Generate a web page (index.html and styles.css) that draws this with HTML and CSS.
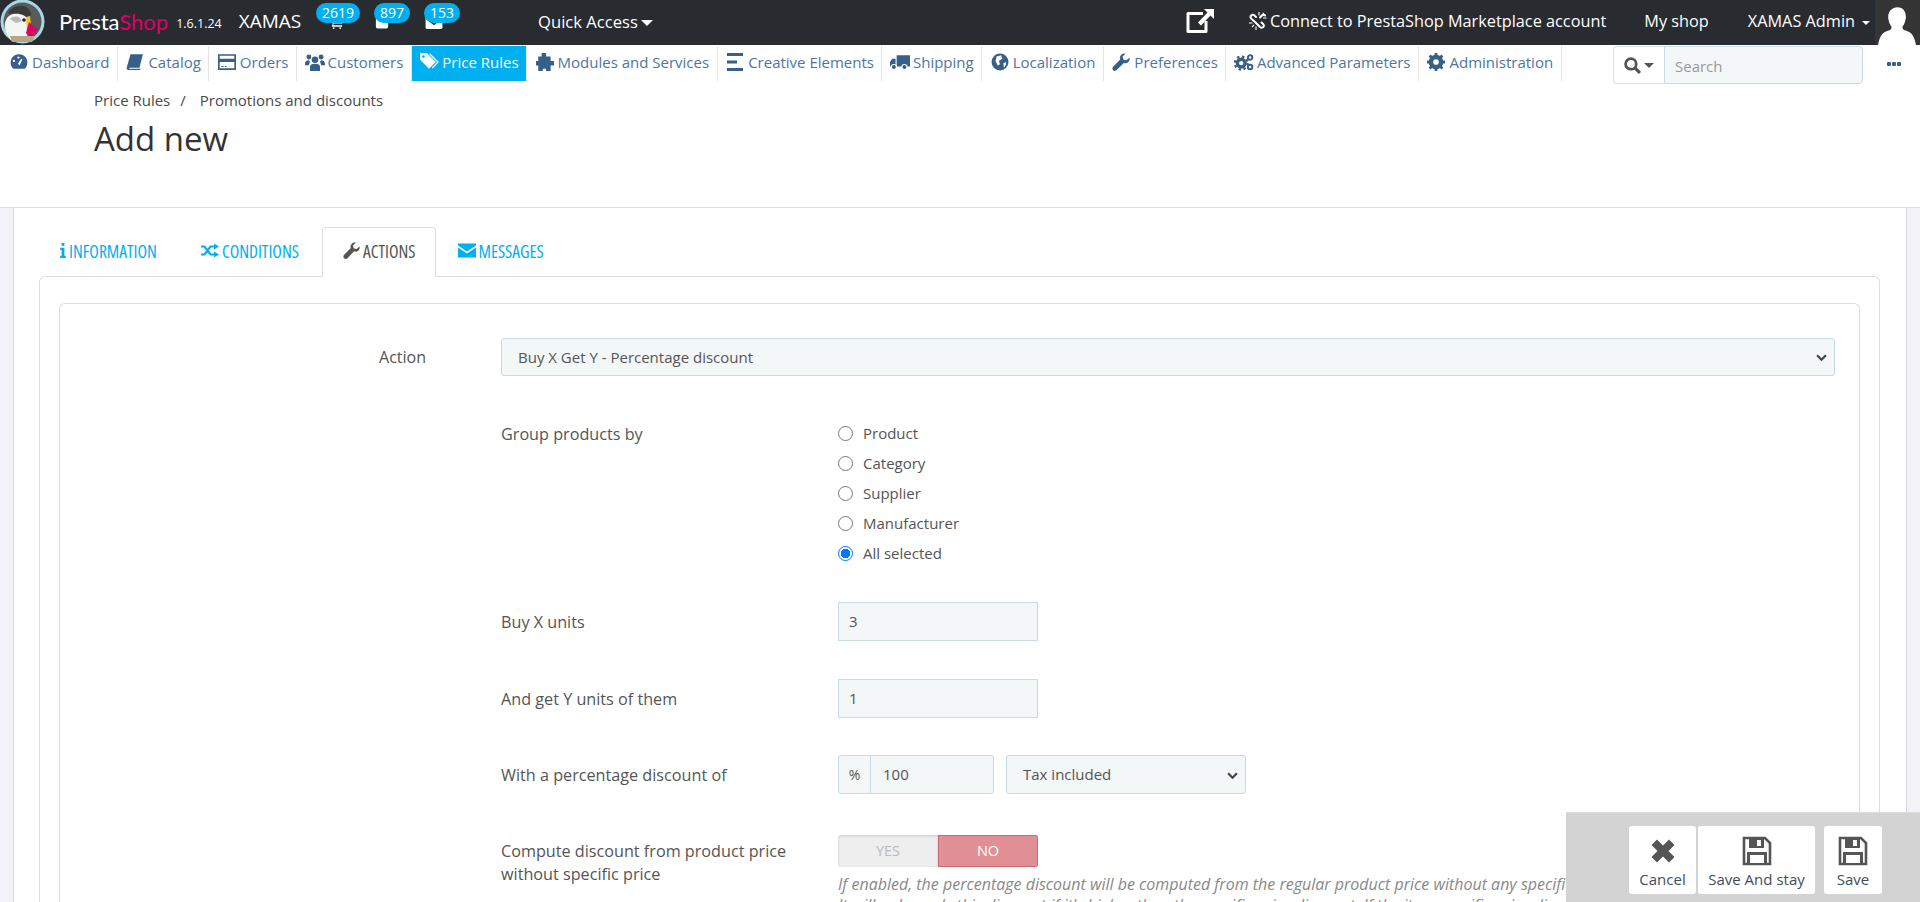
FILE: index.html
```html
<!DOCTYPE html>
<html lang="en">
<head>
<meta charset="utf-8">
<title>Add new - Price Rules</title>
<link rel="stylesheet" href="styles.css">
</head>
<body>
<svg class="defs" width="0" height="0" aria-hidden="true">
  <symbol id="i-save" viewBox="0 0 30 30"><path fill="none" stroke="currentColor" stroke-width="2.600" d="M2 2h21l5 5v21H2z"/><path fill="currentColor" d="M7 2h15v10H7z"/><path fill="#fff" d="M15 4h4v6h-4z"/><path fill="currentColor" d="M5 16h20v12H5z"/><path fill="#fff" d="M8 19h14v8H8z"/></symbol>
  <symbol id="i-wrench" viewBox="0 0 16 16"><path fill="currentColor" d="M15.600 4.200c.3 1.600-.2 3.100-1.300 4-1 .9-2.500 1.100-3.800.6L4.200 15.200c-.9.9-2.300 1-3.200.1s-.8-2.300.1-3.200L7.300 5.700C6.800 4.300 7.100 2.800 8.100 1.800 9.100.8 10.600.3 12 .6L9.400 3.200l.6 2.600 2.700.7z"/></symbol>
</svg>
<header class="topbar">
  <div class="brand">
    <svg class="logo" viewBox="0 0 46 46"><circle cx="22.500" cy="22.500" r="22" fill="#a8d8e6"/><circle cx="22.500" cy="22.500" r="19" fill="#5a5a5a"/><path d="M8 14c3-5 9-8 15-7 5 1 8 5 8 9l-3 3-12-3z" fill="#3a3a3b"/><path d="M5 24c1-5 4-8 8-9 7-1 13 1 15 6l2 8-3 9-6 4H12C7 37 4 31 5 24z" fill="#f4f4f2"/><path d="M10 20c2-3 6-3 9-2l3 4-6 2z" fill="#b9b9b9"/><circle cx="24" cy="21" r="1.800" fill="#222"/><path d="M26 18l4-1 1 9-4 7z" fill="#f5c430"/><path d="M29 23l9 8-8 8-4-5z" fill="#df0067"/><path d="M10 37h25l-3 6H12z" fill="#b7a58a"/></svg>
    <span class="wordmark">Presta<span class="wordmark-pink">Shop</span></span>
    <span class="version">1.6.1.24</span>
    <span class="shopname">XAMAS</span>
  </div>
  <div class="notifs">
    <div class="notif notif-first">
      <svg class="notif-icon ni-cart" viewBox="0 0 16 16"><path fill="#fff" d="M0 1h3l1 2h12l-2 7H5l-.5 2H14v1.500H3l1-3.500L2 2.500H0z"/><circle cx="5" cy="15" r="1" fill="#fff"/><circle cx="12" cy="15" r="1" fill="#fff"/></svg>
      <span class="badge">2619</span>
    </div>
    <div class="notif notif-second">
      <svg class="notif-icon ni-user" viewBox="0 0 16 16"><rect x="1" y="1" width="14" height="15" rx="2" fill="#fff"/></svg>
      <span class="badge">897</span>
    </div>
    <div class="notif notif-third">
      <svg class="notif-icon ni-mail" viewBox="0 0 18 16"><rect x="0" y="1" width="18" height="15" rx="2" fill="#fff"/><path d="M1 5l8 6 8-6" fill="none" stroke="#282b30" stroke-width="1.500"/></svg>
      <span class="badge">153</span>
    </div>
  </div>
  <div class="quick">Quick Access<span class="caret caret-lg"></span></div>
  <div class="top-right">
    <svg class="ext-icon" viewBox="0 0 28 24"><path fill="none" stroke="#fff" stroke-width="3" stroke-linejoin="round" d="M17 4.500H2v18h18V12"/><path fill="#fff" d="M18 0h10v10l-3.500-3.500-9.500 10-3-3 9.500-10z"/></svg>
    <span class="connect">
      <svg class="link-icon" viewBox="0 0 18 18"><path fill="none" stroke="#fff" stroke-width="2" stroke-linecap="round" d="M7 5 5.500 3.500c-1-1-2.500-1-3.300 0-.8.9-.7 2.300.2 3.200L6 10l5 5c1 .9 2.500 1 3.300 0 .8-.8.800-2.200-.2-3.100L12.500 10.500M11 5.500l2-2c1-.9 2.300-.9 3.100 0"/><path stroke="#fff" stroke-width="1.100" d="M10 0v3.500M15 1l-3 3M17.500 6H14M0 11h3.500M3 15l2-2M7 14.500V18"/></svg>
      <span>Connect to PrestaShop Marketplace account</span>
    </span>
    <span class="myshop">My shop</span>
    <span class="admin">XAMAS Admin<span class="caret"></span></span>
    <span class="avatar"><svg viewBox="0 0 46 46"><path fill="#fff" d="M23 7c6 0 9 5 8.500 11-.4 4-2 7-3.500 9 0 2 1 3 4 4 5 2 8 4 10 15H3c2-11 5-13 10-15 3-1 4-2 4-4-1.500-2-3.100-5-3.500-9C13 12 17 7 23 7z"/></svg></span>
  </div>
</header>
<nav class="mainnav">
  <ul class="menu">
    <li class="menu-item menu-first"><svg class="mi" viewBox="0 0 16 16"><path fill="currentColor" fill-rule="evenodd" d="M8 1a7.500 7.500 0 0 1 6.500 11.200c-.5.9-1 1.300-1.500 1.800H3c-.5-.5-1-.9-1.500-1.800A7.500 7.500 0 0 1 8 1zM7 9.500 8.500 11 11 5.500 10 5zM3.500 6a1 1 0 1 0 .01 0zM7.500 3a1 1 0 1 0 .01 0z"/></svg>Dashboard</li>
    <li class="menu-item"><svg class="mi" viewBox="0 0 16 16"><path fill="currentColor" d="M4 1h11l-3 12H3.500c-.8 0-1 .8-.5 1h10l-.3 1H2c-1 0-1.600-1-1.400-2z"/></svg>Catalog</li>
    <li class="menu-item"><svg class="mi" viewBox="0 0 16 16"><path fill="currentColor" fill-rule="evenodd" d="M0 1h16v14H0zM1.500 2.500v2.500h13V2.500zM1.500 8v5.500h13V8zM3 11.500h2v1H3zM6 11.500h1.500v1H6z"/></svg>Orders</li>
    <li class="menu-item"><svg class="mi" viewBox="0 0 18 16"><circle cx="9" cy="6" r="3" fill="currentColor"/><circle cx="3.500" cy="3.500" r="2.200" fill="currentColor"/><circle cx="14.500" cy="3.500" r="2.200" fill="currentColor"/><path fill="currentColor" d="M4.500 16v-4c0-1.500 1.500-2.500 4.500-2.500s4.500 1 4.500 2.500v4zM0 10c0-2 1-3.500 3.500-3.500l1 1-1 3.500H0zM18 10c0-2-1-3.500-3.500-3.500l-1 1 1 3.500H18z"/></svg>Customers</li>
    <li class="menu-item menu-active"><svg class="mi" viewBox="0 0 18 16"><path fill="currentColor" fill-rule="evenodd" d="M1 0h6l8 8-6 6-8-8zM4 2a1.200 1.200 0 1 0 .01 0z"/><path fill="none" stroke="currentColor" stroke-width="1.200" d="M9.500 .5 17 8l-5 5.500"/></svg>Price Rules</li>
    <li class="menu-item"><svg class="mi" viewBox="0 0 16 16"><path fill="currentColor" d="M5 0h4v3h4v4h3v4h-3v5H9v-2H6v2H2v-5H0V7h2V3h3z"/></svg>Modules and Services</li>
    <li class="menu-item"><svg class="mi mi-bars" viewBox="0 0 16 18"><path fill="currentColor" d="M0 0h16v3H0zM0 7.500h10v3H0zM0 15h16v3H0z"/></svg>Creative Elements</li>
    <li class="menu-item"><svg class="mi" viewBox="0 0 18 16"><path fill="currentColor" d="M6 2h12v10H6zM5 5H2L0 8v4h5z"/><circle cx="3.500" cy="12.500" r="2.300" fill="currentColor" stroke="#fff"/><circle cx="13" cy="12.500" r="2.300" fill="currentColor" stroke="#fff"/></svg>Shipping</li>
    <li class="menu-item"><svg class="mi" viewBox="0 0 16 16"><circle cx="8" cy="8" r="7.500" fill="currentColor"/><path fill="#fff" d="M5 3l4-1 1 3-3 2 1 3-2 1-2-4zM11 9l2-1 .5 2-2 3z"/></svg>Localization</li>
    <li class="menu-item"><svg class="mi" viewBox="0 0 16 16"><use href="#i-wrench"/></svg>Preferences</li>
    <li class="menu-item"><svg class="mi" viewBox="0 0 18 16"><circle cx="6.500" cy="9" r="3.500" fill="none" stroke="currentColor" stroke-width="3"/><circle cx="6.500" cy="9" r="5.800" fill="none" stroke="currentColor" stroke-width="2" stroke-dasharray="2.200 2.350"/><circle cx="14.500" cy="4" r="2" fill="none" stroke="currentColor" stroke-width="1.800"/><circle cx="14.500" cy="12.500" r="2" fill="none" stroke="currentColor" stroke-width="1.800"/></svg>Advanced Parameters</li>
    <li class="menu-item"><svg class="mi" viewBox="0 0 16 16"><circle cx="8" cy="8" r="4.500" fill="none" stroke="currentColor" stroke-width="4"/><path stroke="currentColor" stroke-width="2.500" d="M8 0v3M8 13v3M0 8h3M13 8h3M2.300 2.300l2 2M11.700 11.700l2 2M2.300 13.700l2-2M11.700 4.300l2-2"/></svg>Administration</li>
  </ul>
  <div class="search">
    <span class="search-btn">
      <svg class="search-icon" viewBox="0 0 16 16"><circle cx="6.500" cy="6.500" r="5" fill="none" stroke="#555" stroke-width="2.600"/><path stroke="#555" stroke-width="3" d="M10 10l5 5"/></svg>
      <span class="search-caret"></span>
    </span>
    <span class="search-input">Search</span>
  </div>
  <span class="dots"><i></i><i></i><i></i></span>
</nav>
<div class="pagehead">
  <div class="crumbs"><span>Price Rules</span><span class="crumb-sep">/</span><span>Promotions and discounts</span></div>
  <h1 class="title">Add new</h1>
</div>
<main class="content">
  <div class="tabs">
    <div class="tab"><svg class="tab-icon tab-icon-i" viewBox="0 0 6 16"><path fill="currentColor" d="M1.500 0h3v3h-3zM0 5h4.500v8.500H6V16H0v-2.500h1.500v-6H0z"/></svg><span class="tab-label">INFORMATION</span></div>
    <div class="tab"><svg class="tab-icon tab-icon-sh" viewBox="0 0 18 14"><path fill="none" stroke="currentColor" stroke-width="2.200" d="M0 3h3.500l6 8H14M0 11h3.500l6-8H14"/><path fill="currentColor" d="M13 0l5 3-5 3zM13 8l5 3-5 3z"/></svg><span class="tab-label">CONDITIONS</span></div>
    <div class="tab tab-active"><svg class="tab-icon tab-icon-wr" viewBox="0 0 16 16"><use href="#i-wrench"/></svg><span class="tab-label">ACTIONS</span></div>
    <div class="tab"><svg class="tab-icon tab-icon-mail" viewBox="0 0 18 14"><path fill="currentColor" d="M0 0h18v2L9 8 0 2zM0 4l9 6 9-6v10H0z"/></svg><span class="tab-label">MESSAGES</span></div>
  </div>
  <div class="tabpanel">
    <div class="card">
      <div class="row-action">
        <label class="action-label">Action</label>
        <div class="fake-select select-full">Buy X Get Y - Percentage discount<svg class="chev" viewBox="0 0 10 6"><path fill="none" stroke="#444" stroke-width="2" d="M1 1l4 4 4-4"/></svg></div>
      </div>
      <div class="form-grid fg-group">
        <label class="flabel flabel-top">Group products by</label>
        <div class="radios">
          <div class="radio"><span class="dot"></span>Product</div>
          <div class="radio"><span class="dot"></span>Category</div>
          <div class="radio"><span class="dot"></span>Supplier</div>
          <div class="radio"><span class="dot"></span>Manufacturer</div>
          <div class="radio"><span class="dot dot-on"></span>All selected</div>
        </div>
      </div>
      <div class="form-grid fg-buy">
        <label class="flabel">Buy X units</label>
        <div class="textbox">3</div>
      </div>
      <div class="form-grid fg-get">
        <label class="flabel">And get Y units of them</label>
        <div class="textbox">1</div>
      </div>
      <div class="form-grid fg-pct">
        <label class="flabel">With a percentage discount of</label>
        <div class="pct-row">
          <div class="pct-group"><span class="pct-sign">%</span><span class="pct-val">100</span></div>
          <div class="fake-select select-tax">Tax included<svg class="chev" viewBox="0 0 10 6"><path fill="none" stroke="#444" stroke-width="2" d="M1 1l4 4 4-4"/></svg></div>
        </div>
      </div>
      <div class="form-grid fg-compute">
        <label class="flabel flabel-two">Compute discount from product price without specific price</label>
        <div>
          <div class="switch"><span class="sw-yes">YES</span><span class="sw-no">NO</span></div>
          <p class="help">If enabled, the percentage discount will be computed from the regular product price without any specific price applied.<br>It will only apply this discount if it's higher than the specific price discount. If the item specific price discount is used, the percentage is ignored.</p>
        </div>
      </div>
    </div>
  </div>
</main>
<div class="toolbar">
  <div class="tool-btn tool-cancel"><svg class="tool-icon" viewBox="-3 -3 30 30"><path fill="currentColor" d="M6 .5l6 6 6-6 5.500 5.500-6 6 6 6-5.500 5.500-6-6-6 6L.5 18l6-6-6-6z"/></svg>Cancel</div>
  <div class="tool-btn tool-stay"><svg class="tool-icon" viewBox="0 0 30 30"><use href="#i-save"/></svg>Save And stay</div>
  <div class="tool-btn tool-save"><svg class="tool-icon" viewBox="0 0 30 30"><use href="#i-save"/></svg>Save</div>
</div>
</body>
</html>
```
FILE: styles.css
```css
* { box-sizing: border-box; }
html, body { margin: 0; height: 902px; overflow: hidden; }
body { font-family: "Open Sans", "Liberation Sans", sans-serif; font-size: 15px; color: #555; background: #f2f2f8; position: relative; display: flex; flex-direction: column; }
.defs { position: absolute; }

.topbar { height: 45px; flex: none; background: #282b30; color: #fff; display: flex; align-items: center; padding-bottom: 3px; }
.brand { display: flex; align-items: center; width: 316px; flex: none; }
.logo { width: 46px; height: 46px; flex: none; margin-top: 2px; }
.wordmark { font-family: "Lato", sans-serif; font-size: 22px; margin-left: 13px; }
.wordmark-pink { color: #df0067; }
.version { font-size: 12.500px; margin-left: 8px; margin-top: 5px; }
.shopname { font-size: 19px; margin-left: 17px; }
.notifs { display: flex; flex: none; gap: 14px; align-self: flex-start; margin-top: 3px; }
.notif { position: relative; }
.notif-icon { position: absolute; top: 11px; height: 15px; }
.ni-cart { left: 13px; width: 15px; }
.ni-user { left: 1px; width: 14px; }
.ni-mail { left: 1px; width: 18px; }
.badge { position: relative; display: block; height: 20px; padding: 0 6px; background: #00aff0; border-radius: 12px; font-size: 14px; line-height: 20px; text-align: center; white-space: nowrap; }
.quick { font-size: 16.600px; margin-left: 78px; white-space: nowrap; flex: none; }
.caret { display: inline-block; width: 0; height: 0; border: 4.500px solid transparent; border-top-color: #fff; border-bottom: 0; margin-left: 7px; vertical-align: 2px; }
.caret-lg { border-width: 6px; border-bottom: 0; margin-left: 3px; }
.top-right { margin-left: auto; display: flex; align-items: center; font-size: 16.300px; white-space: nowrap; }
.ext-icon { width: 28px; height: 24px; margin-right: 35px; }
.connect { display: flex; align-items: center; gap: 3px; }
.link-icon { width: 18px; height: 18px; }
.myshop { margin-left: 38px; }
.admin { margin-left: 39px; }
.avatar { width: 45px; height: 45px; margin: 3px 0 0 5px; background: #353535; display: block; overflow: hidden; }
.avatar svg { width: 45px; height: 46px; display: block; }

.mainnav { height: 45px; flex: none; background: #fff; display: flex; align-items: flex-start; padding: 0 19px 0 8px; }
.menu { list-style: none; margin: 1px 0 0; padding: 0; display: flex; }
.menu-item { height: 35px; display: flex; align-items: center; padding: 0 7.500px 3px; border-right: 1px solid #e5e5e5; color: #4d76a0; font-size: 15px; white-space: nowrap; }
.menu-first { padding-left: 1px; }
.mi { width: 20px; height: 18px; color: #376088; margin-right: 3px; flex: none; }
.mi-bars { height: 18px; }
.menu-active { background: #00aff0; color: #fff; }
.menu-active .mi { color: #fff; }
.search { margin-left: auto; margin-top: 1px; width: 250px; height: 38px; display: flex; flex: none; }
.search-btn { width: 51px; background: #fff; border: 1px solid #d9e2e6; border-right: 0; border-radius: 4px 0 0 4px; display: flex; align-items: center; padding-left: 10px; gap: 3px; }
.search-icon { width: 17px; height: 17px; }
.search-caret { width: 0; height: 0; border: 5px solid transparent; border-top-color: #555; border-bottom: 0; }
.search-input { flex: 1; background: #f3f7f8; border: 1px solid #c9dbe2; border-radius: 0 4px 4px 0; padding-left: 10px; line-height: 38px; color: #999; font-size: 15px; }
.dots { display: flex; gap: 1px; margin-left: 24px; margin-top: 17px; }
.dots i { width: 4px; height: 4px; border-radius: 1px; background: #376088; display: block; }

.pagehead { height: 118px; flex: none; background: #fff; border-bottom: 1px solid #dcdee2; padding-left: 94px; }
.crumbs { display: flex; font-size: 15px; color: #4a4a4a; line-height: 20px; }
.crumb-sep { margin: 0 14px 0 10px; }
.title { margin: 7px 0 0; font-size: 33px; font-weight: 400; color: #333; line-height: 44px; }

.content { flex: 1; min-height: 0; background: #fff; margin: 0 13px; border-left: 1px solid #d6d6e4; border-right: 1px solid #d6d6e4; padding: 19px 26px 0 25px; display: flex; flex-direction: column; overflow: hidden; }
.tabs { display: flex; height: 49px; flex: none; position: relative; z-index: 1; }
.tab { display: flex; align-items: center; height: 48px; padding: 0 20px 2px; margin-right: 2px; color: #00aff0; gap: 3px; border: 1px solid transparent; border-bottom: 0; }
.tab-active { height: 50px; background: #fff; border-color: #dcdee2; border-radius: 4px 4px 0 0; color: #555; padding-bottom: 4px; }
.tab-label { font-stretch: 75%; font-size: 17.500px; }
.tab-icon { width: 14px; height: 15px; flex: none; }
.tab-icon-i { width: 6px; }
.tab-icon-sh { width: 18px; }
.tab-icon-wr { width: 17px; height: 17px; }
.tab-icon-mail { width: 18px; margin: 0 -1px 0 -1px; }
.tabpanel { flex: 1; min-height: 0; border: 1px solid #dcdee2; border-bottom: 0; border-radius: 6px 6px 0 0; padding: 26px 19px 0; background: #fff; display: flex; flex-direction: column; }
.card { flex: 1; min-height: 0; border: 1px solid #dcdee2; border-bottom: 0; border-radius: 6px 6px 0 0; padding: 34px 24px 0 0; }

.row-action { display: flex; align-items: center; height: 38px; }
.action-label { width: 366px; text-align: right; font-size: 16px; flex: none; }
.fake-select { background: #f3f7f8; border: 1px solid #c9dbe2; border-radius: 3px; font-size: 15px; color: #555; height: 38px; line-height: 36px; padding-left: 16px; position: relative; }
.select-full { margin-left: 75px; flex: 1; }
.chev { position: absolute; right: 7px; top: 15px; width: 11px; height: 7px; }

.form-grid { display: grid; grid-template-columns: 337px 1fr; padding-left: 441px; }
.flabel { font-size: 16.200px; align-self: center; }
.flabel-top { align-self: start; line-height: 32px; }
.flabel-two { align-self: start; line-height: 23px; padding-right: 40px; margin-top: 5px; }
.fg-group { margin-top: 42px; }
.radios { display: flex; flex-direction: column; }
.radio { display: flex; align-items: center; height: 30px; font-size: 15px; }
.dot { width: 15px; height: 15px; border: 1px solid #777; border-radius: 50%; background: #fff; margin-right: 10px; flex: none; }
.dot-on { border: 1px solid #0075ff; background: radial-gradient(circle, #0075ff 0 4.500px, #fff 5px); }
.textbox { width: 200px; height: 39px; background: #f3f7f8; border: 1px solid #c9dbe2; line-height: 37px; padding-left: 10px; }
.fg-buy { margin-top: 34px; }
.fg-get { margin-top: 38px; }
.fg-pct { margin-top: 37px; }
.pct-row { display: flex; gap: 12px; }
.pct-group { display: flex; width: 156px; height: 39px; background: #f3f7f8; border: 1px solid #c9dbe2; border-radius: 3px; line-height: 37px; }
.pct-sign { width: 32px; text-align: center; border-right: 1px solid #c9dbe2; flex: none; font-size: 14px; }
.pct-val { padding-left: 12px; }
.select-tax { width: 240px; height: 39px; line-height: 37px; }
.select-tax .chev { top: 16px; }
.fg-compute { margin-top: 41px; align-items: start; }
.switch { display: flex; width: 200px; height: 32px; border-radius: 3px; overflow: hidden; font-size: 14.500px; text-align: center; line-height: 32px; }
.sw-yes { width: 100px; background: #eee; color: #bbb; box-shadow: inset 0 1px 3px rgba(0,0,0,.15); }
.sw-no { width: 100px; background: #e08f95; color: #fff; border: 1px solid #c86b72; line-height: 30px; }
.help { margin: 7px 0 0; font-size: 16px; font-style: italic; color: #888; line-height: 21px; width: 1000px; }

.toolbar { position: absolute; right: 0; bottom: 0; width: 354px; height: 90px; background: #d3d3d3; padding: 13px 0 0 63px; display: flex; border-top: 1px solid #ddd; z-index: 5; }
.tool-btn { background: #fff; border-radius: 3px; height: 68px; display: flex; flex-direction: column; align-items: center; justify-content: flex-end; padding-bottom: 5px; font-size: 15px; line-height: 20px; color: #3f4c5c; white-space: nowrap; }
.tool-cancel { width: 67px; }
.tool-stay { width: 117px; margin-left: 2px; }
.tool-save { width: 58px; margin-left: 9px; }
.tool-icon { width: 30px; height: 30px; color: #555; margin-bottom: 3px; flex: none; }
```
